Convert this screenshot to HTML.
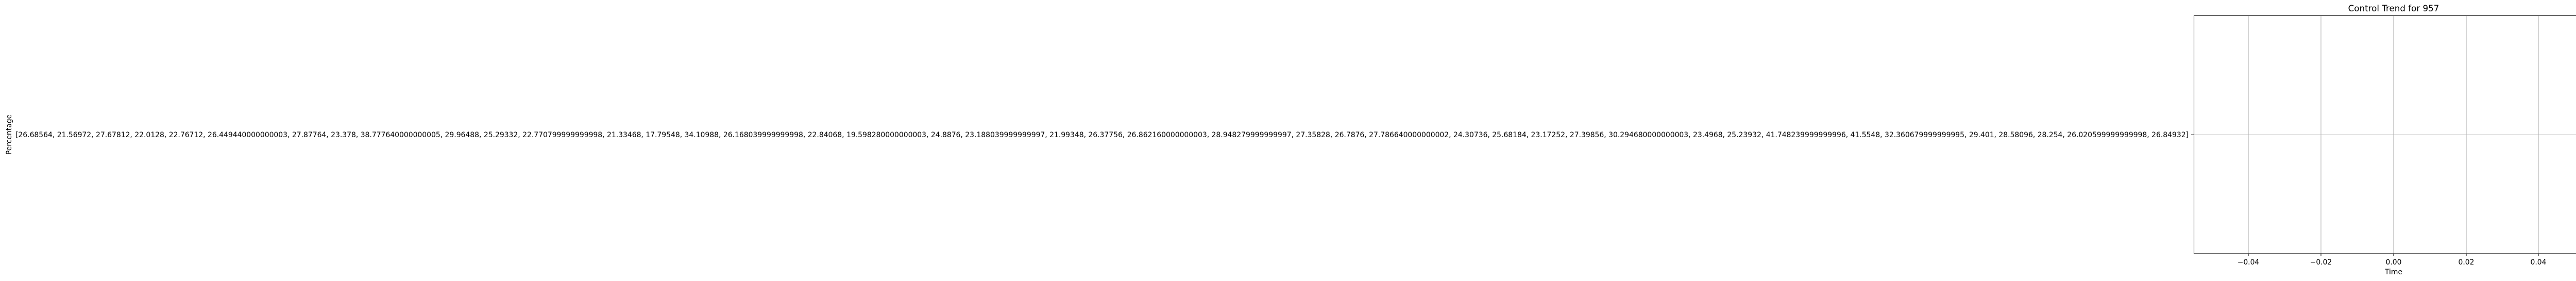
<!DOCTYPE html>
<html><head><meta charset="utf-8"><style>
html,body{margin:0;padding:0;background:#fff;}
svg{display:block;}
text{font-family:"DejaVu Sans","Liberation Sans",sans-serif;fill:#000;}
</style></head><body>
<svg width="5043" height="545" viewBox="0 0 5043 545" xmlns="http://www.w3.org/2000/svg">
<rect width="5043" height="545" fill="#fff"/>
<g stroke="#b0b0b0" stroke-width="1.1">
<line x1="4364" y1="30" x2="4364" y2="492"/>
<line x1="4505" y1="30" x2="4505" y2="492"/>
<line x1="4646" y1="30" x2="4646" y2="492"/>
<line x1="4787" y1="30" x2="4787" y2="492"/>
<line x1="4927" y1="30" x2="4927" y2="492"/>
<line x1="4258" y1="261.5" x2="5033" y2="261.5"/>
</g>
<rect x="4258.5" y="30.5" width="774.5" height="461.5" fill="none" stroke="#000" stroke-width="1.1"/>
<g stroke="#000" stroke-width="1.1">
<line x1="4364" y1="492" x2="4364" y2="497"/>
<line x1="4505" y1="492" x2="4505" y2="497"/>
<line x1="4646" y1="492" x2="4646" y2="497"/>
<line x1="4787" y1="492" x2="4787" y2="497"/>
<line x1="4927" y1="492" x2="4927" y2="497"/>
<line x1="4253" y1="261.5" x2="4258" y2="261.5"/>
</g>
<g font-size="13.9" text-anchor="middle">
<text x="4364" y="513">−0.04</text>
<text x="4505" y="513">−0.02</text>
<text x="4646" y="513">0.00</text>
<text x="4787" y="513">0.02</text>
<text x="4927" y="513">0.04</text>
<text x="4646" y="532">Time</text>
<text x="4646" y="22" font-size="16.7">Control Trend for 957</text>
</g>
<text x="30" y="266" font-size="13.9" textLength="4218" lengthAdjust="spacingAndGlyphs">[26.68564, 21.56972, 27.67812, 22.0128, 22.76712, 26.449440000000003, 27.87764, 23.378, 38.777640000000005, 29.96488, 25.29332, 22.770799999999998, 21.33468, 17.79548, 34.10988, 26.168039999999998, 22.84068, 19.598280000000003, 24.8876, 23.188039999999997, 21.99348, 26.37756, 26.862160000000003, 28.948279999999997, 27.35828, 26.7876, 27.786640000000002, 24.30736, 25.68184, 23.17252, 27.39856, 30.294680000000003, 23.4968, 25.23932, 41.748239999999996, 41.5548, 32.360679999999995, 29.401, 28.58096, 28.254, 26.020599999999998, 26.84932]</text>
<text x="0" y="0" font-size="13.9" text-anchor="middle" transform="translate(22,261) rotate(-90)">Percentage</text>
</svg>
</body></html>
